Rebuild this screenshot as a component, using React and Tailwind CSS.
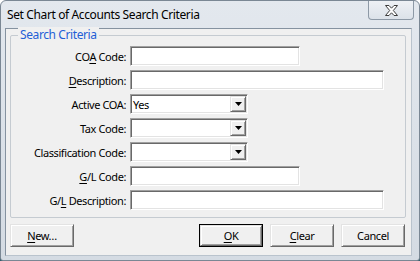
import React from "react";

function U({ children }) {
  return <span className="underline underline-offset-[2px] decoration-[1px]">{children}</span>;
}

function Sunken({ w, children }) {
  return (
    <div
      className={`${w} h-[20px] border border-t-[#a0a0a0] border-l-[#a0a0a0] border-b-[#ffffff] border-r-[#ffffff] shadow-[inset_1px_1px_0_#696969,inset_-1px_-1px_0_#e3e3e3] bg-white flex items-center`}
    >
      {children}
    </div>
  );
}

function Select({ value }) {
  return (
    <div className="w-[118px] h-[20px] border border-t-[#a0a0a0] border-l-[#a0a0a0] border-b-[#ffffff] border-r-[#ffffff] shadow-[inset_1px_1px_0_#696969,inset_-1px_-1px_0_#e3e3e3] bg-white flex items-stretch p-[1px]">
      <div className="flex-1 pl-[1px] flex items-center leading-none">{value}</div>
      <div className="w-[16px] bg-[#f0f0f0] border border-t-[#e3e3e3] border-l-[#e3e3e3] border-b-[#696969] border-r-[#696969] shadow-[inset_1px_1px_0_#ffffff,inset_-1px_-1px_0_#a0a0a0] flex items-center justify-center">
        <svg width="7" height="4" viewBox="0 0 7 4">
          <path d="M0 0H7L3.5 4Z" fill="#000" />
        </svg>
      </div>
    </div>
  );
}

function Row({ label, children }) {
  return (
    <div className="flex items-center h-[20px]">
      <div className="w-[116px] text-right pr-[1px] leading-none whitespace-nowrap">{label}</div>
      <div className="ml-[3px]">{children}</div>
    </div>
  );
}

function Btn({ children, def }) {
  return (
    <div
      className={`w-[64px] h-[23px] flex items-center justify-center bg-[#f0f0f0] ${
        def ? "border border-[#000000]" : ""
      }`}
    >
      <div className="w-full h-full flex items-center justify-center border border-t-[#e3e3e3] border-l-[#e3e3e3] border-b-[#696969] border-r-[#696969] shadow-[inset_1px_1px_0_#ffffff,inset_-1px_-1px_0_#a0a0a0] leading-none">
        {children}
      </div>
    </div>
  );
}

export default function App() {
  return (
    <div className="w-[420px] h-[261px] bg-gradient-to-b from-[#ffffff] via-[#ffffff] to-[#2f5d6b] font-['Noto_Sans',sans-serif] text-[11px] tracking-[-0.4px] text-black">
      <div className="relative w-[420px] h-[261px] rounded-t-[6px] rounded-b-[3px] border border-[#7a8794] bg-gradient-to-b from-[#e3e8ee] to-[#d4dbe3] flex flex-col">
        <div className="h-[27px] flex items-center pl-[6px] text-[12px] tracking-[-0.38px] text-black">
          Set Chart of Accounts Search Criteria
        </div>
        <div className="absolute top-0 right-[5px] w-[46px] h-[19px] border border-t-0 border-[#8d99a6] rounded-b-[4px] bg-gradient-to-b from-[#eef1f5] to-[#dce2e9] flex items-center justify-center">
          <svg width="15" height="11" viewBox="0 0 15 11">
            <path
              d="M1.5 0.5H5L7.5 3.2L10 0.5H13.5L9.3 5.5L13.5 10.5H10L7.5 7.8L5 10.5H1.5L5.7 5.5Z"
              fill="#ffffff"
              stroke="#3c3c3c"
              strokeWidth="1"
              strokeLinejoin="round"
            />
          </svg>
        </div>
        <div className="flex-1 ml-[4px] mr-[7px] mb-[4px] border border-[#8592a0] border-r-[#b9c3cd] border-b-[#b9c3cd] bg-[#f0f0f0] flex flex-col">
          <div className="relative mt-[6px] ml-[4px] mr-[5px] h-[183px] border border-[#c5cbd1] rounded-[2px] pt-[10px] flex flex-col gap-[4px]">
            <div className="absolute -top-[9px] left-[7px] px-[2px] bg-[#f0f0f0] text-[12px] tracking-[-0.4px] leading-[16px] text-[#1f5fd6]">
              Search Criteria
            </div>
            <Row label={<>CO<U>A</U> Code:</>}>
              <Sunken w="w-[170px]" />
            </Row>
            <Row label={<><U>D</U>escription:</>}>
              <Sunken w="w-[254px]" />
            </Row>
            <Row label="Active COA:">
              <Select value="Yes" />
            </Row>
            <Row label="Tax Code:">
              <Select value="" />
            </Row>
            <Row label="Classification Code:">
              <Select value="" />
            </Row>
            <Row label={<><U>G</U>/L Code:</>}>
              <Sunken w="w-[170px]" />
            </Row>
            <Row label={<>G/<U>L</U> Description:</>}>
              <Sunken w="w-[254px]" />
            </Row>
          </div>
          <div className="mt-[6px] ml-[4px] mr-[6px] flex">
            <Btn><U>N</U>ew…</Btn>
            <div className="flex-1" />
            <div className="flex gap-[7px]">
              <Btn def><U>O</U>K</Btn>
              <Btn><U>C</U>lear</Btn>
              <Btn>Cancel</Btn>
            </div>
          </div>
        </div>
      </div>
    </div>
  );
}
